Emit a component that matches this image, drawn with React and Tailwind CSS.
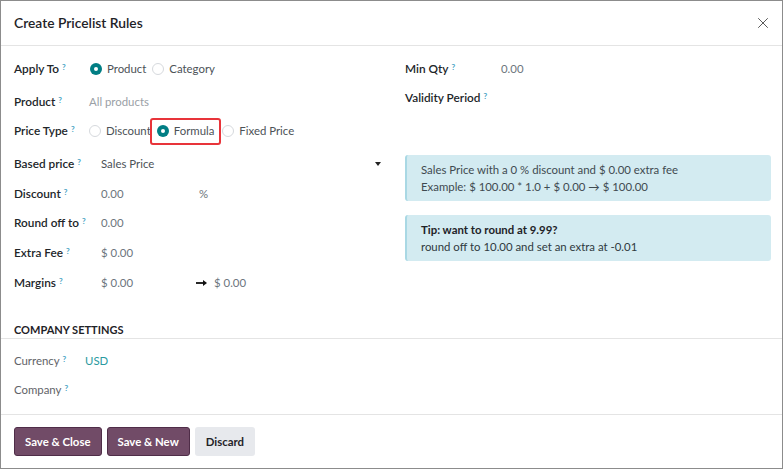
import { X } from 'lucide-react'

const font = { fontFamily: 'Lato, "Noto Sans", sans-serif' }

function Help() {
  return <sup className="ml-[3px] text-[8px] font-bold text-[#4aa3c4] relative -top-[3px]">?</sup>
}

function Radio({ checked, label }) {
  return (
    <span className="flex items-center gap-[5px]">
      {checked ? (
        <span className="w-[12px] h-[12px] rounded-full bg-[#017e84] flex items-center justify-center">
          <span className="w-[4px] h-[4px] rounded-full bg-white" />
        </span>
      ) : (
        <span className="w-[12px] h-[12px] rounded-full border border-[#d6d9dd] bg-white" />
      )}
      <span className="text-[#4c5257]">{label}</span>
    </span>
  )
}

function Row({ label, top, children }) {
  return (
    <div className="flex items-center h-[20px]" style={{ marginTop: top }}>
      <div className="w-[75px] shrink-0 whitespace-nowrap font-semibold text-[11.8px] text-[#212529]">
        {label}<Help />
      </div>
      {children}
    </div>
  )
}

function BoldArrow() {
  return (
    <svg width="12" height="8" viewBox="0 0 12 8" className="mr-[6px]">
      <path d="M0 4h8" stroke="#111" strokeWidth="1.8" />
      <path d="M7 1l4 3-4 3z" fill="#111" />
    </svg>
  )
}

export default function App() {
  return (
    <div className="w-[784px] h-[470px] bg-white text-[11.4px]" style={font}>
      <div className="w-[783px] h-[469px] border border-[#8c8c8c] flex flex-col">
        <div className="h-[45px] shrink-0 flex items-center justify-between pl-[13px] pr-[10px] border-b border-[#e4e4e4]">
          <h1 className="text-[13.8px] font-semibold text-[#1f2328]">Create Pricelist Rules</h1>
          <X size={18} strokeWidth={1.3} className="text-[#555]" />
        </div>

        <div className="flex pl-[13px] pr-[11px]">
          <div className="w-[370px] shrink-0">
            <Row label="Apply To" top={13}>
              <div className="flex items-center gap-[6px] ml-[1px]">
                <Radio checked label="Product" />
                <Radio label="Category" />
              </div>
            </Row>
            <Row label="Product" top={13}>
              <span className="text-[#9aa0a6]">All products</span>
            </Row>
            <Row label="Price Type" top={9}>
              <div className="flex items-center ml-[0px]">
                <Radio label="Discount" />
                <div className="-ml-[1px] px-[5px] h-[27px] flex items-center border-2 border-[#e8343a] rounded-[3px]">
                  <Radio checked label="Formula" />
                </div>
                <div className="ml-[1px]"><Radio label="Fixed Price" /></div>
              </div>
            </Row>
            <Row label="Based price" top={13}>
              <div className="flex-1 flex items-center justify-between pl-[12px] pr-[3px]">
                <span className="text-[#4c5257]">Sales Price</span>
                <svg width="6" height="4" viewBox="0 0 6 4"><path d="M0 0h6L3 4z" fill="#222" /></svg>
              </div>
            </Row>
            <Row label="Discount" top={10}>
              <span className="pl-[12px] w-[110px] text-[#6c757d]">0.00</span>
              <span className="text-[#6c757d]">%</span>
            </Row>
            <Row label="Round off to" top={9}>
              <span className="pl-[12px] text-[#6c757d]">0.00</span>
            </Row>
            <Row label="Extra Fee" top={10}>
              <span className="pl-[12px] text-[#6c757d]">$ 0.00</span>
            </Row>
            <Row label="Margins" top={10}>
              <span className="pl-[12px] w-[107px] text-[#6c757d]">$ 0.00</span>
              <BoldArrow />
              <span className="text-[#6c757d]">$ 0.00</span>
            </Row>
          </div>

          <div className="flex-1 ml-[21px]">
            <div className="flex items-center h-[20px] mt-[13px]">
              <div className="w-[96px] font-semibold text-[11.8px] text-[#212529]">Min Qty<Help /></div>
              <span className="text-[#6c757d]">0.00</span>
            </div>
            <div className="flex items-center h-[20px] mt-[9px]">
              <div className="font-semibold text-[11.8px] text-[#212529]">Validity Period<Help /></div>
            </div>
            <div className="mt-[47px] h-[46px] bg-[#d3ebf1] border-l-[2px] border-[#a9d8e4] rounded-[3px] pl-[14px] flex flex-col justify-center leading-[17px] text-[#3f4a50]">
              <div>Sales Price with a 0 % discount and $ 0.00 extra fee</div>
              <div>Example: $ 100.00 * 1.0 + $ 0.00 → $ 100.00</div>
            </div>
            <div className="mt-[14px] h-[46px] bg-[#d3ebf1] border-l-[2px] border-[#a9d8e4] rounded-[3px] pl-[14px] flex flex-col justify-center leading-[17px] text-[#2f3a40]">
              <div className="font-bold text-[#1f2328]">Tip: want to round at 9.99?</div>
              <div>round off to 10.00 and set an extra at -0.01</div>
            </div>
          </div>
        </div>

        <div className="mt-[29px] pl-[13px] h-[16px] flex items-center text-[11px] font-bold text-[#1f2328]">COMPANY SETTINGS</div>
        <div className="border-t border-[#e4e4e4]" />
        <div className="pl-[13px]">
          <div className="flex items-center h-[20px] mt-[12px]">
            <div className="w-[71px] text-[#5f6368]">Currency<Help /></div>
            <span className="text-[#2a9aa0]">USD</span>
          </div>
          <div className="flex items-center h-[20px] mt-[9px]">
            <div className="text-[#5f6368]">Company<Help /></div>
          </div>
        </div>

        <div className="mt-auto border-t border-[#e4e4e4] h-[54px] shrink-0 flex items-center gap-[5px] pl-[13px]">
          <button className="h-[29px] px-[10px] bg-[#714b67] border border-[#4f2d48] rounded-[3px] text-white font-bold">Save &amp; Close</button>
          <button className="h-[29px] px-[10px] bg-[#714b67] border border-[#4f2d48] rounded-[3px] text-white font-bold">Save &amp; New</button>
          <button className="h-[29px] px-[11px] bg-[#e7e9ed] rounded-[3px] text-[#1f2328] font-bold">Discard</button>
        </div>
      </div>
    </div>
  )
}
